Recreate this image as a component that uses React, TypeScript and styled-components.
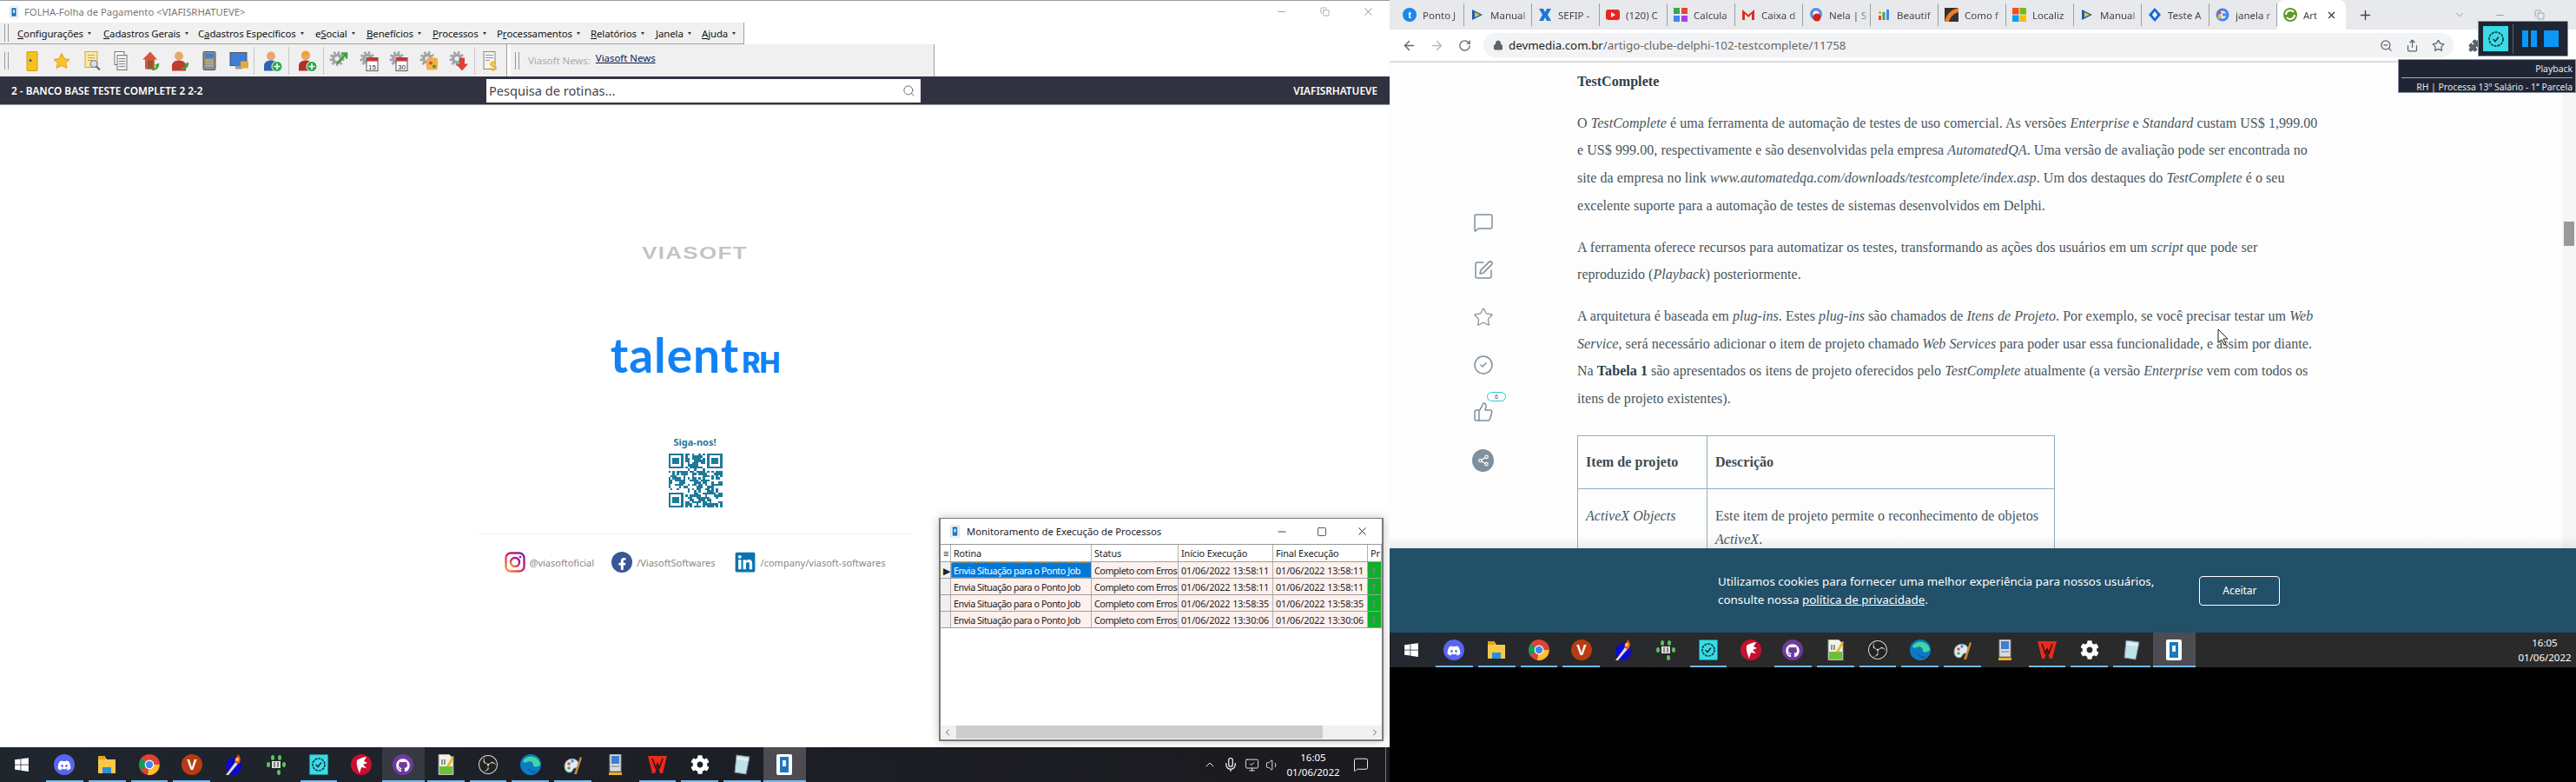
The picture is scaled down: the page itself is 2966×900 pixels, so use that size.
import React from 'react';
import styled, { createGlobalStyle } from 'styled-components';
import {
  ArrowLeft, ArrowRight, ChevronDown, ChevronLeft, ChevronRight, ChevronUp, Minus, Mic, Plus, RotateCw, Lock, Share, Star, Puzzle,
  Square, X, Copy, ZoomOut, Search, MessageSquare, SquarePen, CircleCheck, ThumbsUp, Share2, Volume1, MonitorCheck,
} from 'lucide-react';
import { FaDiscord, FaFacebookF, FaLinkedin, FaWindows, FaCog, FaGithub } from 'react-icons/fa';
import { SiObsstudio } from 'react-icons/si';

const GlobalStyle = createGlobalStyle`
  html, body { margin: 0; padding: 0; background: #000; overflow: hidden; }
  * { box-sizing: border-box; }
`;

const UI_FONT = '"Noto Sans", "Liberation Sans", sans-serif';

const Desktop = styled.div`
  display: flex;
  width: 2966px;
  height: 900px;
  background: #000;
  font-family: ${UI_FONT};
`;

const LeftScreen = styled.div`
  position: relative;
  display: flex;
  flex-direction: column;
  width: 1600px;
  height: 900px;
  background: #fff;
`;

const RightScreen = styled.div`
  position: relative;
  display: flex;
  flex-direction: column;
  width: 1366px;
  height: 768px;
`;

/* left window */
const TitleBar = styled.div`
  display: flex;
  align-items: center;
  height: 26px;
  padding-left: 9px;
  border-top: 1px solid #999;
  font-size: 11.3px;
  color: #777;
  gap: 5px;
`;

const WindowButtons = styled.div<{ $color?: string }>`
  display: flex;
  margin-left: auto;
  color: ${p => p.$color || '#555'};
`;

const WindowButton = styled.span<{ $w: number }>`
  display: flex;
  align-items: center;
  justify-content: center;
  width: ${p => p.$w}px;
`;

const BarRow = styled.div`
  display: flex;
  background: #fff;
`;

const MenuBar = styled.div`
  display: flex;
  align-items: center;
  width: 857px;
  height: 25px;
  padding-left: 5px;
  background: #f0f0f0;
  border-right: 1px solid #a0a0a0;
  border-bottom: 1px solid #a0a0a0;
`;

const Grip = styled.span`
  width: 5px;
  height: 20px;
  margin-right: 10px;
  border-left: 1px solid #999;
  border-right: 1px solid #999;
  flex: none;
`;

const MenuItem = styled.span<{ $w: number }>`
  display: flex;
  align-items: center;
  width: ${p => p.$w}px;
  font-size: 11.4px;
  color: #111;
  white-space: nowrap;
  letter-spacing: -0.1px;

  &::after {
    content: '';
    margin-left: 5px;
    border-left: 2.5px solid transparent;
    border-right: 2.5px solid transparent;
    border-top: 3px solid #333;
  }
`;

const ToolStrip = styled.div<{ $w: number }>`
  display: flex;
  align-items: center;
  width: ${p => p.$w}px;
  height: 37px;
  margin-right: 4px;
  padding-left: 5px;
  background: #f0f0f0;
  border-right: 1px solid #a0a0a0;
`;

const ToolIcon = styled.span<{ $w: number }>`
  display: flex;
  justify-content: center;
  width: ${p => p.$w}px;
`;

const ToolSeparator = styled.span`
  width: 1px;
  height: 32px;
  background: #c8c8c8;
  flex: none;
`;

const NewsLabel = styled.span`
  font-size: 11.4px;
  color: #aaa;
  margin-right: 6px;
`;

const NewsLink = styled.span`
  font-size: 11.4px;
  color: #0a1a50;
  text-decoration: underline;
  position: relative;
  top: -3px;
`;

const DarkBar = styled.div`
  display: flex;
  align-items: center;
  height: 33px;
  padding: 0 14px 0 13px;
  background: #30333f;
  color: #fff;
  font-size: 11.8px;
  font-weight: 600;
  border-bottom: 1px solid #999;
`;

const DatabaseLabel = styled.span`
  width: 547px;
`;

const UserLabel = styled.span`
  margin-left: auto;
`;

const SearchBox = styled.div`
  display: flex;
  align-items: center;
  justify-content: space-between;
  width: 500px;
  height: 27px;
  padding: 0 6px 0 3px;
  background: #fff;
  color: #444;
  font-size: 14.6px;
  font-weight: 400;
`;

const Splash = styled.div`
  flex: 1;
  display: flex;
  flex-direction: column;
  align-items: center;
  padding-top: 162px;
`;

const ViasoftLogo = styled.div`
  height: 15px;
  line-height: 15px;
  font-family: "Liberation Sans", sans-serif;
  font-size: 21px;
  font-weight: 700;
  letter-spacing: 1px;
  color: #c4c4c4;
  transform: scaleX(1.24);
`;

const TalentLogo = styled.div`
  display: flex;
  align-items: baseline;
  height: 42px;
  margin-top: 89px;
  line-height: 42px;
  color: #1182f5;
  font-family: "Lato", sans-serif;
  font-size: 55px;
  font-weight: 700;
  letter-spacing: 1px;
`;

const TalentSuffix = styled.span`
  margin-left: 3px;
  font-family: "Inter", sans-serif;
  font-size: 32px;
  font-weight: 800;
  letter-spacing: -1px;
`;

const FollowTitle = styled.div`
  height: 14px;
  margin-top: 73px;
  line-height: 14px;
  font-size: 11px;
  font-weight: 700;
  color: #1f7a9a;
`;

const QrWrap = styled.div`
  margin-top: 6px;
  height: 62px;
`;

const Divider = styled.div`
  width: 500px;
  height: 1px;
  margin-top: 30px;
  background: #f0f0f0;
`;

const SocialRow = styled.div`
  display: flex;
  align-items: center;
  height: 24px;
  margin-top: 20px;
`;

const SocialText = styled.span<{ $mr?: number }>`
  margin: 0 ${p => p.$mr ?? 0}px 0 5px;
  font-size: 11px;
  color: #888;
`;

/* process monitor */
const MonitorWindow = styled.div`
  position: absolute;
  left: 1081px;
  top: 596px;
  width: 512px;
  height: 257px;
  display: flex;
  flex-direction: column;
  background: #fff;
  border: 2px solid #7a7a7a;
  border-top-width: 1px;
  box-shadow: 0 0 10px rgba(0, 0, 0, 0.25);
`;

const MonitorTitle = styled.div`
  display: flex;
  align-items: center;
  height: 30px;
  padding-left: 9px;
  gap: 6px;
  font-size: 11.3px;
  color: #1a1a2e;
  border-bottom: 1px solid #999;
`;

const GridRow = styled.div<{ $h: number }>`
  display: grid;
  grid-template-columns: 12px 162px 100px 109px 109px 16px;
  height: ${p => p.$h}px;
  border-bottom: 1px solid #a0a0a0;
  overflow: hidden;
`;

const GridCell = styled.span<{ $tone?: 'head' | 'row' | 'selected' | 'side' | 'bar'; $tight?: boolean }>`
  display: flex;
  align-items: center;
  padding-left: 3px;
  font-size: 10.8px;
  letter-spacing: ${p => (p.$tight ? -0.45 : -0.1)}px;
  white-space: nowrap;
  overflow: hidden;
  border-right: 1px solid #b0b0b0;
  color: ${p => (p.$tone === 'selected' ? '#fff' : p.$tone === 'bar' ? '#e040c0' : '#222')};
  background: ${p =>
    p.$tone === 'selected' ? '#0078d7' : p.$tone === 'row' ? '#fdf0ed' : p.$tone === 'side' ? '#f0f0f0' : p.$tone === 'bar' ? '#0db02b' : '#fff'};
  outline: ${p => (p.$tone === 'selected' ? '1px dotted #f0a030' : 'none')};
  outline-offset: -1px;
`;

const EmptyGrid = styled.div`
  flex: 1;
`;

const HScroll = styled.div`
  display: flex;
  align-items: center;
  justify-content: space-between;
  height: 15px;
  margin-bottom: 1px;
  padding: 0 2px;
  background: #f0f0f0;
  color: #666;
`;

const HScrollThumb = styled.div`
  width: 422px;
  height: 15px;
  margin-left: 4px;
  margin-right: auto;
  background: #cdcdcd;
`;

/* taskbar */
const TaskbarWrap = styled.div<{ $right?: boolean }>`
  display: flex;
  align-items: center;
  height: 40px;
  flex: none;
  background: ${p => (p.$right ? 'linear-gradient(90deg, #23282f, #2a2a2a 30%)' : 'linear-gradient(90deg, #20262e, #1d2027 40%, #1a1a1f)')};
  color: #fff;
`;

const StartCell = styled.span`
  display: flex;
  align-items: center;
  justify-content: center;
  width: 50px;
  height: 40px;
`;

const TaskCell = styled.span<{ $running?: boolean; $active?: boolean; $hover?: boolean }>`
  position: relative;
  display: flex;
  align-items: center;
  justify-content: center;
  width: 48.75px;
  height: 40px;
  background: ${p => (p.$active ? '#4c4c52' : p.$hover ? '#353a42' : 'transparent')};

  &::after {
    content: '';
    position: absolute;
    bottom: 0;
    left: ${p => (p.$active || p.$hover ? 0 : 3)}px;
    right: ${p => (p.$active || p.$hover ? 0 : 3)}px;
    height: 2px;
    background: ${p => (p.$running ? '#76b9ed' : 'transparent')};
  }
`;

const Tray = styled.div<{ $pr: number }>`
  display: flex;
  align-items: center;
  margin-left: auto;
  padding-right: ${p => p.$pr}px;
  height: 40px;
`;

const TrayIcon = styled.span`
  display: flex;
  justify-content: center;
  width: 24px;
`;

const Clock = styled.div`
  width: 70px;
  text-align: center;
  font-size: 11.5px;
  line-height: 17px;
`;

const NotifyCell = styled.span`
  display: flex;
  justify-content: center;
  width: 40px;
  margin-right: 8px;
`;

const TrayEdge = styled.span`
  width: 1px;
  height: 40px;
  background: #777;
`;

/* browser */
const TabStrip = styled.div`
  display: flex;
  align-items: center;
  height: 34px;
  padding-left: 8px;
  background: #e7e9ec;
  color: #5f6368;
`;

const Tab = styled.div<{ $active?: boolean }>`
  display: flex;
  align-items: center;
  flex: none;
  width: ${p => (p.$active ? 79 : 78)}px;
  height: ${p => (p.$active ? 34 : 26)}px;
  padding-left: 7px;
  gap: 7px;
  font-size: 11.5px;
  color: #444;
  background: ${p => (p.$active ? '#fff' : 'transparent')};
  border-radius: ${p => (p.$active ? '8px 8px 0 0' : '0')};
  border-right: ${p => (p.$active ? 'none' : '1px solid #9aa0a6')};
  white-space: nowrap;
  overflow: hidden;
`;

const TabText = styled.span`
  flex: 1;
  overflow: hidden;
  -webkit-mask-image: linear-gradient(90deg, #000 75%, transparent);
  mask-image: linear-gradient(90deg, #000 75%, transparent);
`;

const TabClose = styled.span`
  display: flex;
  margin-right: 10px;
  color: #333;
`;

const FavIcon = styled.svg`
  flex: none;
`;

const NewTab = styled.span`
  display: flex;
  margin-left: 14px;
  color: #444;
`;

const ChromeButtons = styled.div`
  display: flex;
  align-items: center;
  margin-left: 77px;
  color: #777;
`;

const BrowserBar = styled.div`
  display: flex;
  align-items: center;
  height: 38px;
  padding-left: 6px;
  background: #fff;
  border-bottom: 2px solid #dcdcdc;
  color: #5f6368;
`;

const NavButton = styled.span<{ $dim?: boolean }>`
  display: flex;
  justify-content: center;
  width: 32px;
  color: ${p => (p.$dim ? '#b8b8b8' : '#5f6368')};
`;

const AddressBar = styled.div`
  display: flex;
  align-items: center;
  width: 1117px;
  height: 28px;
  margin: 0 8px 0 6px;
  padding: 0 10px 0 11px;
  border-radius: 14px;
  background: #f1f3f4;
  font-size: 13.3px;
`;

const UrlHost = styled.span`
  margin-left: 6px;
  color: #222;
`;

const UrlPath = styled.span`
  color: #666;
`;

const AddressActions = styled.span`
  display: flex;
  align-items: center;
  margin-left: auto;
  gap: 15px;
`;

const PageArea = styled.div`
  position: relative;
  display: flex;
  height: 559px;
  overflow: hidden;
  background: #fdfdfd;

  &::after {
    content: '';
    position: absolute;
    left: 0;
    right: 0;
    bottom: 0;
    height: 14px;
    background: linear-gradient(180deg, rgba(0, 0, 0, 0), rgba(0, 0, 0, 0.07));
  }
`;

const SideActions = styled.div`
  display: flex;
  flex-direction: column;
  align-items: center;
  width: 216px;
  padding-top: 172px;
  gap: 30.5px;
  color: #7f8f9c;
  flex: none;
`;

const ActionSlot = styled.span`
  position: relative;
  display: flex;
  width: 24px;
  height: 24px;
`;

const LikeBadge = styled.span`
  position: absolute;
  top: -11px;
  left: 16px;
  width: 22px;
  height: 11px;
  border: 1px solid #2fc5d8;
  border-radius: 6px;
  background: #fff;
  font-size: 7px;
  line-height: 9px;
  text-align: center;
  color: #456;
`;

const ShareBubble = styled.span`
  display: flex;
  align-items: center;
  justify-content: center;
  width: 26px;
  height: 26px;
  border-radius: 50%;
  background: #7f8f9c;
  color: #fff;
  margin-left: -1px;
`;

const Article = styled.article`
  width: 900px;
  padding-top: 6px;
  font-family: "Liberation Serif", serif;
  font-size: 16px;
  letter-spacing: 0.06px;
  line-height: 31.7px;
  color: #48565f;
`;

const Para = styled.p`
  margin: 0 0 16px;
  white-space: nowrap;

  strong {
    color: #2f3e48;
  }
`;

const ProjectTable = styled.table`
  width: 550px;
  margin-top: 26px;
  border-collapse: collapse;

  td {
    border: 1px solid #8fb0c4;
    padding: 17px 9px 14px;
    line-height: 27px;
    vertical-align: top;
  }

  td:first-child {
    width: 149px;
  }

  tr:first-child td {
    padding: 16px 9px 17px;
    font-weight: 700;
    color: #3d4a53;
  }
`;

const ScrollRail = styled.div`
  position: absolute;
  right: 0;
  top: 0;
  bottom: 0;
  width: 16px;
  background: #f6f6f6;
`;

const ScrollHandle = styled.div`
  margin: 183px 2px 0;
  height: 28px;
  background: #999;
`;

const CookieBar = styled.div`
  display: flex;
  align-items: center;
  height: 97px;
  padding-left: 378px;
  background: #215068;
  color: #fff;
  font-size: 13.4px;
  line-height: 21px;
  flex: none;
`;

const CookieLink = styled.span`
  text-decoration: underline;
`;

const AcceptButton = styled.span`
  display: flex;
  align-items: center;
  justify-content: center;
  width: 93px;
  height: 34px;
  margin-left: 52px;
  border: 1px solid #fff;
  border-radius: 4px;
  font-size: 12px;
`;

/* overlays on the right screen */
const PlayerBox = styled.div`
  position: absolute;
  left: 1253px;
  top: 24px;
  display: flex;
  align-items: center;
  width: 104px;
  height: 41px;
  background: #1f2533;
  border: 1px solid #8a93a5;
  padding-left: 5px;
`;

const PlayerBadge = styled.span`
  display: flex;
  align-items: center;
  justify-content: center;
  width: 29px;
  height: 29px;
  background: #39dbe6;
  color: #10343c;
`;

const PlayerDivider = styled.span`
  width: 1px;
  height: 34px;
  margin: 0 10px 0 5px;
  background: #59627a;
`;

const PauseBar = styled.span`
  width: 7px;
  height: 19px;
  margin-right: 3px;
  background: #0b97f5;
`;

const StopBlock = styled.span`
  width: 17px;
  height: 19px;
  margin-left: 5px;
  background: #0b97f5;
`;

const PlayerTip = styled.div`
  position: absolute;
  left: 1161px;
  top: 68px;
  width: 205px;
  height: 39px;
  background: #1f2533;
  border: 1px solid #8a93a5;
  color: #e8e8e8;
  font-size: 10.4px;
  line-height: 15px;
  text-align: right;
  padding: 3px 3px 0 3px;
  white-space: nowrap;
`;

const TipRule = styled.div`
  height: 1px;
  margin: 2px 0 3px;
  background: #aab;
`;

const CursorMark = styled.svg`
  position: absolute;
  left: 953px;
  top: 378px;
`;

/* drawings */
const Gear = ({ c = '#a0a4a8', x = 10, y = 10, r = 6 }: { c?: string; x?: number; y?: number; r?: number }) => (
  <g>
    <circle cx={x} cy={y} r={r + 1} fill="none" stroke={c} strokeWidth={3} strokeDasharray="2.6 2.2" />
    <circle cx={x} cy={y} r={r} fill={c} />
    <circle cx={x} cy={y} r={r / 2.4} fill="#f0f0f0" />
  </g>
);

const Person = ({ c, head = '#e9a66c' }: { c: string; head?: string }) => (
  <g>
    <circle cx="11" cy="7" r="5" fill={head} />
    <path d="M3 24v-6c0-4 4-6 8-6s8 2 8 6v6z" fill={c} />
  </g>
);

const PlusMark = ({ c = '#27a84a' }: { c?: string }) => (
  <g>
    <circle cx="18" cy="19" r="6" fill={c} stroke="#fff" />
    <path d="M18 15.5v7M14.5 19h7" stroke="#fff" strokeWidth="1.6" />
  </g>
);

const CalendarMark = ({ n }: { n: string }) => (
  <g>
    <rect x="9" y="9" width="13" height="15" fill="#fff" stroke="#555" />
    <rect x="9" y="9" width="13" height="4" fill="#c23a3a" />
    <text x="15.5" y="22" fontSize="8" textAnchor="middle" fontFamily="Liberation Sans" fill="#222">{n}</text>
  </g>
);

const toolDrawings: React.ReactNode[] = [
  <g key="door"><rect x="6" y="2" width="12" height="22" rx="1" fill="#f5c11e" stroke="#d99a10" /><circle cx="10" cy="12" r="1.5" fill="#1a5fb4" /></g>,
  <polygon key="star" points="12,4 15,10 21,11 16.5,15 18,21 12,18 6,21 7.5,15 3,11 9,10" fill="#fbc02d" stroke="#ee9b10" />,
  <g key="find"><rect x="5" y="2" width="14" height="18" fill="#fbe7a5" stroke="#c9a94a" /><path d="M8 6h8M8 9h8M8 12h6" stroke="#c9a94a" /><circle cx="15" cy="16" r="4" fill="#cfe3f3" stroke="#777" /><path d="M18 19l4 4" stroke="#666" strokeWidth="2" /></g>,
  <g key="copies"><rect x="5" y="2" width="11" height="15" fill="#fff" stroke="#777" /><rect x="8" y="6" width="11" height="17" fill="#eee" stroke="#777" /><path d="M10 10h7M10 13h7M10 16h7M10 19h7" stroke="#888" /></g>,
  <g key="home"><path d="M12 2L3 11h3v11h11V11h3z" fill="#d9563e" /><rect x="9" y="12" width="6" height="10" fill="#8d5a2b" /><path d="M14 22c4 1 7-2 7-5l-3 1" fill="none" stroke="#36a63a" strokeWidth="2.4" /></g>,
  <g key="staff"><Person c="#c23b2e" /><path d="M14 21c4 1 7-2 7-5l-3 1" fill="none" stroke="#36a63a" strokeWidth="2.4" /></g>,
  <g key="calc"><rect x="5" y="2" width="14" height="21" rx="1" fill="#8a8f96" stroke="#555" /><rect x="7" y="4" width="10" height="5" fill="#3f7fd0" /><path d="M8 12h2M11 12h2M14 12h2M8 15h2M11 15h2M14 15h2M8 18h2M11 18h2M14 18h2" stroke="#f5c542" strokeWidth="1.6" /></g>,
  <g key="screen"><rect x="2" y="3" width="19" height="15" fill="#3b7fd6" stroke="#555" /><rect x="8" y="18" width="8" height="4" fill="#999" /><rect x="14" y="13" width="9" height="8" fill="#e8a93a" /></g>,
  <g key="addUser"><Person c="#2d62b5" /><PlusMark /></g>,
  <g key="addWorker"><Person c="#b5302a" /><path d="M6 6a5 5 0 0 1 10 0z" fill="#eda42a" /><PlusMark /></g>,
  <g key="gearArrow"><Gear /><path d="M10 16L20 5M15 4h6v6" fill="none" stroke="#3aa23a" strokeWidth="2.6" /></g>,
  <g key="gear15"><Gear /><CalendarMark n="15" /></g>,
  <g key="gear30"><Gear /><CalendarMark n="30" /></g>,
  <g key="gearBag"><Gear /><rect x="9" y="9" width="13" height="14" rx="2" fill="#f4b23c" /><circle cx="14" cy="15" r="2" fill="#d93e8c" /><circle cx="18" cy="19" r="2" fill="#34a04a" /></g>,
  <g key="gearDown"><Gear /><path d="M13 9h6v7h4l-7 8-7-8h4z" fill="#d9413a" /></g>,
  <g key="money"><rect x="5" y="2" width="13" height="20" fill="#f3f3f3" stroke="#888" /><path d="M7 6h9M7 9h9M7 12h5" stroke="#999" /><text x="16" y="23" fontSize="15" fontWeight="700" textAnchor="middle" fontFamily="Liberation Sans" fill="#e8b320">$</text></g>,
];

const ToolDrawing = ({ i }: { i: number }) => (
  <svg width="24" height="26" viewBox="0 0 24 25">{toolDrawings[i]}</svg>
);

const AppLogo = ({ size = 16 }: { size?: number }) => (
  <svg width={size} height={size} viewBox="0 0 16 16">
    <rect x="3" y="0" width="10" height="16" rx="1" fill="#fff" stroke="#c8d0d8" />
    <rect x="5" y="2.5" width="6" height="11" fill="#1b78c2" />
    <rect x="7" y="5" width="2" height="4" fill="#fff" />
  </svg>
);

const Fav = ({ children }: { children: React.ReactNode }) => (
  <FavIcon width="16" height="16" viewBox="0 0 16 16">{children}</FavIcon>
);

const TaskChrome = () => (
  <svg width="24" height="24" viewBox="0 0 24 24">
    <circle cx="12" cy="12" r="12" fill="#db4437" />
    <path d="M12 12L1.6 18A12 12 0 0 1 3 5z" fill="#0f9d58" />
    <path d="M12 12h11.6A12 12 0 0 1 10 24z" fill="#fbc02d" />
    <circle cx="12" cy="12" r="5.4" fill="#fff" />
    <circle cx="12" cy="12" r="4.2" fill="#4285f4" />
  </svg>
);

const taskIcons: React.ReactNode[] = [
  <svg key="dc" width="24" height="24" viewBox="0 0 24 24"><circle cx="12" cy="12" r="12" fill="#5865f2" /><foreignObject x="4" y="4" width="16" height="16"><FaDiscord color="#fff" size={16} /></foreignObject></svg>,
  <svg key="ex" width="24" height="24" viewBox="0 0 24 24"><path d="M2 3h8l2 3h10v16H2z" fill="#f8c84a" /><rect x="2" y="2" width="8" height="4" fill="#e3a21a" /><rect x="7" y="15" width="10" height="7" fill="#2a8fd6" /></svg>,
  <TaskChrome key="ch" />,
  <svg key="vi" width="24" height="24" viewBox="0 0 24 24"><circle cx="12" cy="12" r="12" fill="#b83c10" /><text x="12" y="18" fontSize="17" fontWeight="700" textAnchor="middle" fontFamily="Liberation Sans" fill="#fff">V</text></svg>,
  <svg key="to" width="24" height="24" viewBox="0 0 24 24"><ellipse cx="12" cy="14" rx="9" ry="10" fill="#0b0bd0" /><path d="M3 24L14 9l3 2L6 24z" fill="#ddd" /><path d="M14 10c-2-4 2-5 3-10 3 3 4 7 1 11z" fill="#f2521e" /><circle cx="16" cy="6" r="2" fill="#fbd23c" /></svg>,
  <svg key="do" width="24" height="24" viewBox="0 0 24 24"><g fill="#57c65a"><ellipse cx="8" cy="4" rx="2" ry="3" /><ellipse cx="16" cy="4" rx="2" ry="3" /><ellipse cx="3" cy="12" rx="2" ry="3" /><ellipse cx="21" cy="12" rx="2" ry="3" /><ellipse cx="15" cy="21" rx="2" ry="3" /></g><rect x="7" y="8" width="10" height="8" fill="#ddd" /><path d="M10 9v6M14 9v6" stroke="#333" /></svg>,
  <svg key="te" width="24" height="24" viewBox="0 0 24 24"><rect x="1" width="22" height="24" fill="#39dbe6" stroke="#12343c" /><circle cx="12" cy="12" r="7" fill="none" stroke="#12343c" strokeWidth="1.6" strokeDasharray="3 1" /><path d="M8.5 12l2.5 2.5 4-5" fill="none" stroke="#12343c" strokeWidth="1.6" /></svg>,
  <svg key="de" width="24" height="24" viewBox="0 0 24 24"><circle cx="12" cy="12" r="12" fill="#c8102e" /><path d="M7 7c5-3 9-4 11-4l-3 5 4 2-5 2 4 4-6-1-2 7c-2-5-4-10-3-15z" fill="#fff" /></svg>,
  <svg key="gh" width="24" height="24" viewBox="0 0 24 24"><circle cx="12" cy="12" r="12" fill="#6e3a9e" /><foreignObject x="4" y="4" width="16" height="16"><FaGithub color="#fff" size={16} /></foreignObject></svg>,
  <svg key="np" width="24" height="24" viewBox="0 0 24 24"><path d="M4 0h12l5 5v19H4z" fill="#eef3e6" stroke="#888" /><rect x="5" y="14" width="15" height="9" fill="#6cbf3a" /><path d="M8 6v6M11 6v6" stroke="#333" /><path d="M13 14L20 2l2 1-6 12z" fill="#e8b52a" /></svg>,
  <svg key="ob" width="24" height="24" viewBox="0 0 24 24"><circle cx="12" cy="12" r="12" fill="#222" /><foreignObject x="1" y="1" width="22" height="22"><SiObsstudio color="#ddd" size={22} /></foreignObject></svg>,
  <svg key="ed" width="24" height="24" viewBox="0 0 24 24"><circle cx="12" cy="12" r="12" fill="#0c7bc4" /><path d="M3 8C6 1 20 0 23 11c0 3-4 4-8 3 1-4-3-7-7-5-2 1-4 1-5-1z" fill="#42d6a0" /><path d="M8 12c0 6 7 9 12 6-4 6-11 5-12-6z" fill="#0a5fa8" /></svg>,
  <svg key="pa" width="24" height="24" viewBox="0 0 24 24"><path d="M3 14C3 6 12 3 17 7c4 4 2 9-2 9-3 0-2 5-6 5-4 0-6-3-6-7z" fill="#dfeaf4" stroke="#888" /><circle cx="8" cy="11" r="1.8" fill="#e24b3a" /><circle cx="12" cy="8" r="1.8" fill="#3a9ae2" /><circle cx="8" cy="16" r="1.8" fill="#45b34a" /><path d="M14 23L21 3l2 1-6 19z" fill="#c48a3a" /></svg>,
  <svg key="pc" width="24" height="24" viewBox="0 0 24 24"><rect x="6" y="0" width="13" height="20" fill="#d8dce0" stroke="#888" /><rect x="8" y="2" width="9" height="9" fill="#3b7fd6" /><path d="M8 14h9" stroke="#777" /><rect x="5" y="21" width="15" height="3" fill="#f0b21e" /></svg>,
  <svg key="wp" width="24" height="24" viewBox="0 0 24 24"><path d="M1 2h22l-5 20h-3l-3-9-3 9H6z" fill="#ea2a1d" /><path d="M6 5l4 11 2-5 2 5 4-11" fill="none" stroke="#2a0b0b" strokeWidth="1.4" /></svg>,
  <FaCog key="co" size={22} color="#fff" />,
  <svg key="no" width="24" height="24" viewBox="0 0 24 24"><path d="M6 1l15 2-4 20-13-2z" fill="#bfe2ea" stroke="#789" /><path d="M7 3l13 2-1 3-13-2z" fill="#e6eef0" /></svg>,
  <svg key="ap" width="24" height="24" viewBox="0 0 24 24"><rect x="3" y="0" width="18" height="24" rx="2" fill="#fff" /><rect x="7" y="3" width="10" height="18" fill="#1b78c2" /><rect x="10" y="7" width="4" height="7" fill="#e6f2fb" /></svg>,
];

const runningSlots = [0, 1, 2, 3, 6, 8, 9, 10, 11, 12, 14, 15, 16, 17];

const Taskbar = ({ right }: { right?: boolean }) => (
  <TaskbarWrap $right={right}>
    <StartCell><FaWindows size={18} color="#fff" /></StartCell>
    {taskIcons.map((icon, i) => (
      <TaskCell key={i} $running={runningSlots.includes(i)} $active={i === 17} $hover={!right && i === 8}>
        {icon}
      </TaskCell>
    ))}
    {right ? (
      <Tray $pr={1}>
        <Clock>16:05<br />01/06/2022</Clock>
      </Tray>
    ) : (
      <Tray $pr={4}>
        <TrayIcon><ChevronUp size={16} strokeWidth={1.4} /></TrayIcon>
        <TrayIcon><Mic size={18} strokeWidth={1.6} /></TrayIcon>
        <TrayIcon><MonitorCheck size={17} strokeWidth={1.2} /></TrayIcon>
        <TrayIcon><Volume1 size={17} strokeWidth={1.2} /></TrayIcon>
        <Clock>16:05<br />01/06/2022</Clock>
        <NotifyCell><MessageSquare size={18} strokeWidth={1.2} /></NotifyCell>
        <TrayEdge />
      </Tray>
    )}
  </TaskbarWrap>
);

const qrPattern = () => {
  const size = 25;
  const cells: [number, number][] = [];
  let seed = 73;
  const finder = (x: number, y: number) => x < 7 && y < 7 && (x === 0 || y === 0 || x === 6 || y === 6 || (x > 1 && x < 5 && y > 1 && y < 5));
  for (let y = 0; y < size; y++) {
    for (let x = 0; x < size; x++) {
      const inTL = x < 8 && y < 8;
      const inTR = x > 16 && y < 8;
      const inBL = x < 8 && y > 16;
      if (inTL || inTR || inBL) {
        const fx = inTR ? x - 18 : x;
        const fy = inBL ? y - 18 : y;
        if (fx >= 0 && fy >= 0 && finder(fx, fy)) cells.push([x, y]);
        continue;
      }
      seed = (seed * 137 + 29) % 1024;
      if (seed % 7 < 4) cells.push([x, y]);
    }
  }
  return cells;
};

const QrCode = () => (
  <svg width="63" height="62" viewBox="0 0 25 25" shapeRendering="crispEdges">
    {qrPattern().map(([x, y]) => (
      <rect key={`${x}-${y}`} x={x} y={y} width="1" height="1" fill="#1f7a9a" />
    ))}
  </svg>
);

const InstagramMark = () => (
  <svg width="24" height="24" viewBox="0 0 24 24">
    <defs>
      <linearGradient id="ig" x1="0" y1="1" x2="1" y2="0">
        <stop offset="0" stopColor="#f9a13a" />
        <stop offset="0.5" stopColor="#d6235f" />
        <stop offset="1" stopColor="#7a1fb0" />
      </linearGradient>
    </defs>
    <rect x="1.5" y="1.5" width="21" height="21" rx="5.5" fill="none" stroke="url(#ig)" strokeWidth="2.4" />
    <circle cx="12" cy="12" r="5" fill="none" stroke="url(#ig)" strokeWidth="2.4" />
    <circle cx="18" cy="6" r="1.4" fill="#b0207f" />
  </svg>
);

const FacebookMark = () => (
  <svg width="24" height="24" viewBox="0 0 24 24">
    <circle cx="12" cy="12" r="12" fill="#3a5795" />
    <foreignObject x="5" y="5" width="14" height="16"><FaFacebookF color="#fff" size={15} /></foreignObject>
  </svg>
);

const menus = [
  { before: '', hot: 'C', after: 'onfigurações', w: 99 },
  { before: '', hot: 'C', after: 'adastros Gerais', w: 109 },
  { before: 'C', hot: 'a', after: 'dastros Específicos', w: 135 },
  { before: 'e', hot: 'S', after: 'ocial', w: 59 },
  { before: '', hot: 'B', after: 'enefícios', w: 76 },
  { before: '', hot: 'P', after: 'rocessos', w: 74 },
  { before: 'P', hot: 'r', after: 'ocessamentos', w: 108 },
  { before: '', hot: 'R', after: 'elatórios', w: 75 },
  { before: '', hot: 'J', after: 'anela', w: 53 },
  { before: '', hot: 'A', after: 'juda', w: 45 },
];

const rows = [
  ['01/06/2022 13:58:11', '01/06/2022 13:58:11'],
  ['01/06/2022 13:58:11', '01/06/2022 13:58:11'],
  ['01/06/2022 13:58:35', '01/06/2022 13:58:35'],
  ['01/06/2022 13:30:06', '01/06/2022 13:30:06'],
];

const tabs: { title: string; fav: React.ReactNode }[] = [
  { title: 'Ponto J', fav: <><circle cx="8" cy="8" r="8" fill="#1d86e8" /><text x="8" y="12" fontSize="11" fontWeight="700" textAnchor="middle" fill="#fff" fontFamily="Liberation Sans">t</text></> },
  { title: 'Manual', fav: <><path d="M2 2l12 6-12 6z" fill="#1a5fb4" /><path d="M5 5l6 3-6 3z" fill="#f5c518" /></> },
  { title: 'SEFIP -', fav: <path d="M1 1l5 0 2 4 2-4 5 0-4 7 4 7-5 0-2-4-2 4-5 0 4-7z" fill="#1e78d6" /> },
  { title: '(120) C', fav: <><rect y="2" width="16" height="12" rx="3" fill="#e8261d" /><path d="M6 5l5 3-5 3z" fill="#fff" /></> },
  { title: 'Calcula', fav: <><rect width="7" height="7" fill="#34a853" /><rect x="9" width="7" height="7" fill="#ea4335" /><rect y="9" width="7" height="7" fill="#4285f4" /><rect x="9" y="9" width="7" height="7" fill="#a142f4" /></> },
  { title: 'Caixa d', fav: <path d="M1 14V2l7 6 7-6v12h-3V7L8 11 4 7v7z" fill="#d93025" /> },
  { title: 'Nela | S', fav: <><circle cx="8" cy="7" r="7" fill="#5a8fe0" /><circle cx="8" cy="7" r="3.5" fill="#fff" /><circle cx="9" cy="11" r="4.5" fill="#d41f1f" /></> },
  { title: 'Beautif', fav: <><path d="M2 9h3v5H2z" fill="#e8453c" /><path d="M6.5 5h3v9h-3z" fill="#3aa757" /><path d="M11 2h3v12h-3z" fill="#4285f4" /><path d="M2 4h3v3H2z" fill="#f5b400" /></> },
  { title: 'Como f', fav: <><rect width="16" height="16" fill="#333" /><path d="M0 16C2 7 8 2 16 0v5C10 7 6 11 5 16z" fill="#f47b20" /></> },
  { title: 'Localiz', fav: <><rect width="7.5" height="7.5" fill="#f25022" /><rect x="8.5" width="7.5" height="7.5" fill="#7fba00" /><rect y="8.5" width="7.5" height="7.5" fill="#00a4ef" /><rect x="8.5" y="8.5" width="7.5" height="7.5" fill="#ffb900" /></> },
  { title: 'Manual', fav: <><path d="M2 2l12 6-12 6z" fill="#1a5fb4" /><path d="M5 5l6 3-6 3z" fill="#f5c518" /></> },
  { title: 'Teste A', fav: <><path d="M8 0l7 8-7 8-7-8z" fill="#1269d3" /><path d="M8 4l3 4-3 4-3-4z" fill="#fff" /></> },
  { title: 'janela r', fav: <><circle cx="8" cy="8" r="6" fill="none" stroke="#4285f4" strokeWidth="3" /><path d="M8 8h7" stroke="#4285f4" strokeWidth="3" /><path d="M3 4l3 3" stroke="#ea4335" strokeWidth="3" /><path d="M3 12l3-3" stroke="#fbbc05" strokeWidth="3" /></> },
];

const App = () => (
  <Desktop>
    <GlobalStyle />
    <LeftScreen>
      <TitleBar>
        <AppLogo size={14} />
        <span>FOLHA-Folha de Pagamento &lt;VIAFISRHATUEVE&gt;</span>
        <WindowButtons>
          <WindowButton $w={50}><Minus size={13} strokeWidth={1} /></WindowButton>
          <WindowButton $w={50}><Copy size={11} strokeWidth={1} /></WindowButton>
          <WindowButton $w={50}><X size={15} strokeWidth={1} /></WindowButton>
        </WindowButtons>
      </TitleBar>
      <BarRow>
        <MenuBar>
          <Grip />
          {menus.map(m => (
            <MenuItem key={m.before + m.hot + m.after} $w={m.w}>
              {m.before}<u>{m.hot}</u>{m.after}
            </MenuItem>
          ))}
        </MenuBar>
      </BarRow>
      <BarRow>
        <ToolStrip $w={584}>
          <Grip />
          {toolDrawings.map((_, i) => (
            <React.Fragment key={i}>
              {i === 8 || i === 9 || i === 10 || i === 15 ? <ToolSeparator /> : null}
              <ToolIcon $w={i < 8 ? 34 : i < 10 ? 39 : 34.5}><ToolDrawing i={i} /></ToolIcon>
            </React.Fragment>
          ))}
        </ToolStrip>
        <ToolStrip $w={488}>
          <Grip />
          <NewsLabel>Viasoft News:</NewsLabel>
          <NewsLink>Viasoft News</NewsLink>
        </ToolStrip>
      </BarRow>
      <DarkBar>
        <DatabaseLabel>2 - BANCO BASE TESTE COMPLETE 2 2-2</DatabaseLabel>
        <SearchBox>
          <span>Pesquisa de rotinas...</span>
          <Search size={15} strokeWidth={1.2} />
        </SearchBox>
        <UserLabel>VIAFISRHATUEVE</UserLabel>
      </DarkBar>
      <Splash>
        <ViasoftLogo>VIASOFT</ViasoftLogo>
        <TalentLogo>talent<TalentSuffix>RH</TalentSuffix></TalentLogo>
        <FollowTitle>Siga-nos!</FollowTitle>
        <QrWrap><QrCode /></QrWrap>
        <Divider />
        <SocialRow>
          <InstagramMark />
          <SocialText $mr={20}>@viasoftoficial</SocialText>
          <FacebookMark />
          <SocialText $mr={21}>/ViasoftSoftwares</SocialText>
          <FaLinkedin size={26} color="#0a73b1" />
          <SocialText>/company/viasoft-softwares</SocialText>
        </SocialRow>
      </Splash>
      <Taskbar />
      <MonitorWindow>
        <MonitorTitle>
          <AppLogo size={15} />
          <span>Monitoramento de Execução de Processos</span>
          <WindowButtons $color="#222">
            <WindowButton $w={46}><Minus size={14} strokeWidth={1.5} /></WindowButton>
            <WindowButton $w={46}><Square size={12} strokeWidth={1.5} /></WindowButton>
            <WindowButton $w={46}><X size={15} strokeWidth={1.5} /></WindowButton>
          </WindowButtons>
        </MonitorTitle>
        <GridRow $h={20}>
          <GridCell $tone="head">≡</GridCell>
          <GridCell $tone="head">Rotina</GridCell>
          <GridCell $tone="head">Status</GridCell>
          <GridCell $tone="head">Início Execução</GridCell>
          <GridCell $tone="head">Final Execução</GridCell>
          <GridCell $tone="head">Pr</GridCell>
        </GridRow>
        {rows.map((r, i) => (
          <GridRow key={i} $h={19}>
            <GridCell $tone="side">{i === 0 ? '▶' : ''}</GridCell>
            <GridCell $tone={i === 0 ? 'selected' : 'row'} $tight>Envia Situação para o Ponto Job</GridCell>
            <GridCell $tone="row" $tight>Completo com Erros</GridCell>
            <GridCell $tone="row">{r[0]}</GridCell>
            <GridCell $tone="row">{r[1]}</GridCell>
            <GridCell $tone="bar">1</GridCell>
          </GridRow>
        ))}
        <EmptyGrid />
        <HScroll>
          <ChevronLeft size={12} />
          <HScrollThumb />
          <ChevronRight size={12} />
        </HScroll>
      </MonitorWindow>
    </LeftScreen>

    <RightScreen>
      <TabStrip>
        {tabs.map((t, i) => (
          <Tab key={i}>
            <Fav>{t.fav}</Fav>
            <TabText>{t.title}</TabText>
          </Tab>
        ))}
        <Tab $active>
          <Fav><circle cx="8" cy="8" r="8" fill="#5f9b2a" /><path d="M3 8a5 5 0 0 1 9-3M13 8a5 5 0 0 1-9 3" fill="none" stroke="#fff" strokeWidth="2" /></Fav>
          <TabText>Art</TabText>
          <TabClose><X size={13} /></TabClose>
        </Tab>
        <NewTab><Plus size={17} /></NewTab>
        <ChromeButtons>
          <WindowButton $w={46}><ChevronDown size={14} strokeWidth={1.2} /></WindowButton>
          <WindowButton $w={46}><Minus size={13} strokeWidth={1.2} /></WindowButton>
          <WindowButton $w={46}><Copy size={12} strokeWidth={1.2} /></WindowButton>
          <WindowButton $w={46}><X size={15} strokeWidth={1.2} /></WindowButton>
        </ChromeButtons>
      </TabStrip>
      <BrowserBar>
        <NavButton><ArrowLeft size={17} /></NavButton>
        <NavButton $dim><ArrowRight size={17} /></NavButton>
        <NavButton><RotateCw size={15} /></NavButton>
        <AddressBar>
          <Lock size={12} fill="#5f6368" />
          <UrlHost>devmedia.com.br</UrlHost>
          <UrlPath>/artigo-clube-delphi-102-testcomplete/11758</UrlPath>
          <AddressActions>
            <ZoomOut size={15} />
            <Share size={15} />
            <Star size={15} />
          </AddressActions>
        </AddressBar>
        <NavButton><Puzzle size={15} fill="#5f6368" /></NavButton>
      </BrowserBar>
      <PageArea>
        <SideActions>
          <ActionSlot><MessageSquare size={24} strokeWidth={1.5} /></ActionSlot>
          <ActionSlot><SquarePen size={24} strokeWidth={1.5} /></ActionSlot>
          <ActionSlot><Star size={24} strokeWidth={1.2} /></ActionSlot>
          <ActionSlot><CircleCheck size={24} strokeWidth={1.5} /></ActionSlot>
          <ActionSlot>
            <ThumbsUp size={24} strokeWidth={1.5} />
            <LikeBadge>6</LikeBadge>
          </ActionSlot>
          <ActionSlot><ShareBubble><Share2 size={14} /></ShareBubble></ActionSlot>
        </SideActions>
        <Article>
          <Para><strong>TestComplete</strong></Para>
          <Para>
            O <em>TestComplete</em> é uma ferramenta de automação de testes de uso comercial. As versões <em>Enterprise</em> e <em>Standard</em> custam US$ 1,999.00<br />
            e US$ 999.00, respectivamente e são desenvolvidas pela empresa <em>AutomatedQA</em>. Uma versão de avaliação pode ser encontrada no<br />
            site da empresa no link <em>www.automatedqa.com/downloads/testcomplete/index.asp</em>. Um dos destaques do <em>TestComplete</em> é o seu<br />
            excelente suporte para a automação de testes de sistemas desenvolvidos em Delphi.
          </Para>
          <Para>
            A ferramenta oferece recursos para automatizar os testes, transformando as ações dos usuários em um <em>script</em> que pode ser<br />
            reproduzido (<em>Playback</em>) posteriormente.
          </Para>
          <Para>
            A arquitetura é baseada em <em>plug-ins</em>. Estes <em>plug-ins</em> são chamados de <em>Itens de Projeto</em>. Por exemplo, se você precisar testar um <em>Web</em><br />
            <em>Service</em>, será necessário adicionar o item de projeto chamado <em>Web Services</em> para poder usar essa funcionalidade, e assim por diante.<br />
            Na <strong>Tabela 1</strong> são apresentados os itens de projeto oferecidos pelo <em>TestComplete</em> atualmente (a versão <em>Enterprise</em> vem com todos os<br />
            itens de projeto existentes).
          </Para>
          <ProjectTable>
            <tbody>
              <tr><td>Item de projeto</td><td>Descrição</td></tr>
              <tr>
                <td><em>ActiveX Objects</em></td>
                <td>Este item de projeto permite o reconhecimento de objetos <em>ActiveX</em>.</td>
              </tr>
            </tbody>
          </ProjectTable>
        </Article>
        <ScrollRail><ScrollHandle /></ScrollRail>
      </PageArea>
      <CookieBar>
        <div>
          Utilizamos cookies para fornecer uma melhor experiência para nossos usuários,<br />
          consulte nossa <CookieLink>política de privacidade</CookieLink>.
        </div>
        <AcceptButton>Aceitar</AcceptButton>
      </CookieBar>
      <Taskbar right />
      <PlayerBox>
        <PlayerBadge>
          <svg width="24" height="24" viewBox="0 0 24 24">
            <circle cx="12" cy="12" r="8" fill="none" stroke="currentColor" strokeWidth="1.6" strokeDasharray="3 1" />
            <path d="M8.5 12l2.5 2.5 4-5" fill="none" stroke="currentColor" strokeWidth="1.6" />
          </svg>
        </PlayerBadge>
        <PlayerDivider />
        <PauseBar />
        <PauseBar />
        <StopBlock />
      </PlayerBox>
      <PlayerTip>
        Playback
        <TipRule />
        RH | Processa 13º Salário - 1ª Parcela
      </PlayerTip>
      <CursorMark width="12" height="20" viewBox="0 0 12 20">
        <path d="M1 1v15l4-3 3 6 2-1-3-6h5z" fill="#fff" stroke="#222" />
      </CursorMark>
    </RightScreen>
  </Desktop>
);

export default App;
